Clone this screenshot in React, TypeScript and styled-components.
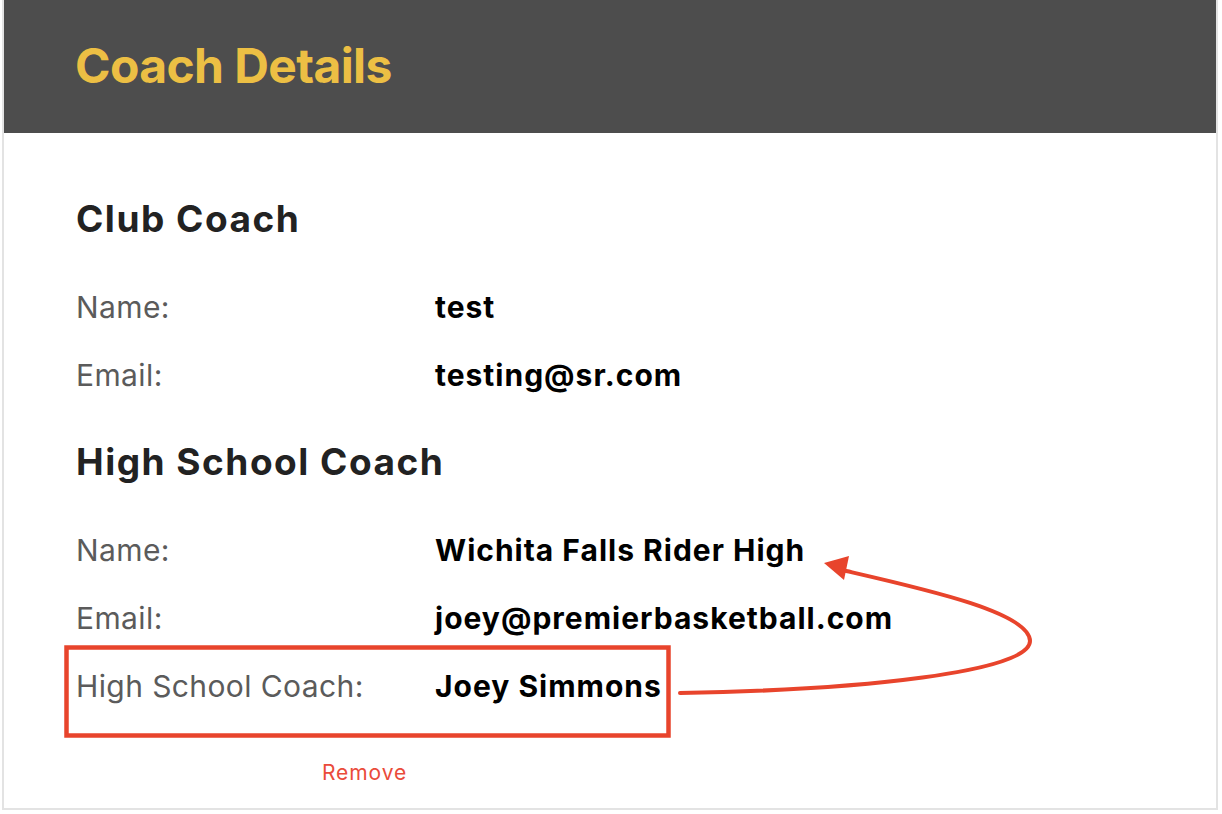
import React from "react";
import styled, { createGlobalStyle } from "styled-components";

const GlobalStyle = createGlobalStyle`
  html, body {
    margin: 0;
    padding: 0;
    background: #ffffff;
  }
  body {
    font-family: Inter, "Noto Sans", "Liberation Sans", sans-serif;
  }
`;

const Page = styled.div`
  position: relative;
  width: 1222px;
  height: 814px;
  overflow: hidden;
`;

const Panel = styled.section`
  margin-left: 2px;
  width: 1212px;
  height: 808px;
  border: 2px solid #e3e3e3;
  border-top: none;
  display: flex;
  flex-direction: column;
`;

const Header = styled.header`
  height: 133px;
  background: #4d4d4d;
  padding-left: 71px;
  display: flex;
  align-items: flex-start;
`;

const Title = styled.h1`
  margin: 0;
  font-size: 48px;
  line-height: 131px;
  font-weight: 700;
  letter-spacing: -0.6px;
  color: #ecbf44;
`;

const Body = styled.div`
  padding: 33px 0 0 72px;
  display: flex;
  flex-direction: column;
`;

const SectionTitle = styled.h2`
  margin: 23px 0 24px;
  font-size: 37px;
  line-height: 60px;
  font-weight: 700;
  letter-spacing: 1.5px;
  color: #222222;
`;

const Row = styled.div`
  display: grid;
  grid-template-columns: 359px 1fr;
  height: 68px;
  align-items: start;
`;

const Label = styled.span`
  font-size: 30px;
  line-height: 68px;
  font-weight: 400;
  letter-spacing: 0.4px;
  color: #5b5b5b;
`;

const Value = styled.span`
  font-size: 30px;
  line-height: 68px;
  font-weight: 700;
  letter-spacing: 1px;
  color: #000000;
`;

const RemoveLink = styled.a`
  margin: 41px 0 0 246px;
  font-size: 21px;
  line-height: 24px;
  letter-spacing: 0.9px;
  color: #ea4b3a;
  text-decoration: none;
  cursor: pointer;
  align-self: flex-start;
`;

const Annotation = styled.svg`
  position: absolute;
  left: 0;
  top: 0;
  width: 1222px;
  height: 814px;
  pointer-events: none;
`;

type Field = { label: string; value: string };

const sections: { title: string; fields: Field[] }[] = [
  {
    title: "Club Coach",
    fields: [
      { label: "Name:", value: "test" },
      { label: "Email:", value: "testing@sr.com" },
    ],
  },
  {
    title: "High School Coach",
    fields: [
      { label: "Name:", value: "Wichita Falls Rider High" },
      { label: "Email:", value: "joey@premierbasketball.com" },
      { label: "High School Coach:", value: "Joey Simmons" },
    ],
  },
];

export default function App() {
  return (
    <>
      <GlobalStyle />
      <Page>
        <Panel>
          <Header>
            <Title>Coach Details</Title>
          </Header>
          <Body>
            {sections.map((s) => (
              <React.Fragment key={s.title}>
                <SectionTitle>{s.title}</SectionTitle>
                {s.fields.map((f) => (
                  <Row key={f.label}>
                    <Label>{f.label}</Label>
                    <Value>{f.value}</Value>
                  </Row>
                ))}
              </React.Fragment>
            ))}
            <RemoveLink>Remove</RemoveLink>
          </Body>
        </Panel>
        <Annotation viewBox="0 0 1222 814">
          <rect
            x="66.5"
            y="647.5"
            width="602"
            height="88"
            fill="none"
            stroke="#e8442c"
            strokeWidth="4.5"
          />
          <path
            d="M 680 693 C 860 690, 1030 672, 1030 641 C 1030 612, 920 588, 842 570"
            fill="none"
            stroke="#e8442c"
            strokeWidth="4"
            strokeLinecap="round"
          />
          <polygon points="824,563 849,556 844,580" fill="#e8442c" />
        </Annotation>
      </Page>
    </>
  );
}
